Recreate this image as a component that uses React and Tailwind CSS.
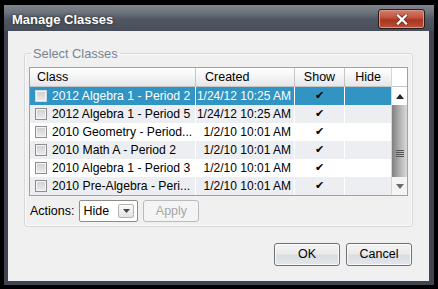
import React from 'react';

const rows = [
  { name: '2012 Algebra 1 - Period 2', created: '1/24/12 10:25 AM', show: true, selected: true },
  { name: '2012 Algebra 1 - Period 5', created: '1/24/12 10:25 AM', show: true },
  { name: '2010 Geometry - Period...', created: '1/2/10 10:01 AM', show: true },
  { name: '2010 Math A - Period 2', created: '1/2/10 10:01 AM', show: true },
  { name: '2010 Algebra 1 - Period 3', created: '1/2/10 10:01 AM', show: true },
  { name: '2010 Pre-Algebra - Peri...', created: '1/2/10 10:01 AM', show: true },
];

const Checkbox = ({ selected }) => (
  <span
    className={`inline-block w-[12px] h-[12px] shrink-0 border ${
      selected ? 'border-[#c9dbe6]' : 'border-[#8d8d8d]'
    } bg-[linear-gradient(to_bottom,#cfcfcf,#ececec)] shadow-[inset_0_0_0_1px_#f4f4f4]`}
  />
);

const Row = ({ row, index }) => {
  const bg = row.selected ? 'bg-[#3194c3]' : index % 2 ? 'bg-[#eceef1]' : 'bg-white';
  const text = row.selected ? 'text-white' : 'text-black';
  return (
    <div className={`grid grid-cols-[166px_99px_50px_46px] h-[18px] ${bg} ${text}`}>
      <div className="flex items-center gap-[5px] pl-[5px] border-r border-white overflow-hidden whitespace-nowrap text-[12.2px]">
        <Checkbox selected={row.selected} />
        <span>{row.name}</span>
      </div>
      <div className="flex items-center justify-end pr-[3px] border-r border-white whitespace-nowrap text-[12px]">
        {row.created}
      </div>
      <div className="flex items-center justify-center border-r border-white font-['DejaVu_Sans',sans-serif] text-[11px]">
        {row.show ? <span className="text-black">✔</span> : null}
      </div>
      <div className="flex items-center justify-center" />
    </div>
  );
};

const Scrollbar = () => (
  <div className="w-[16px] flex flex-col border-l border-[#d6d6d6]">
    <div className="h-[19px] bg-white border-b border-[#c6c6c6]" />
    <div className="h-[18px] bg-white flex items-center justify-center">
      <svg width="8" height="5" viewBox="0 0 8 5">
        <path d="M0 5 L4 0 L8 5 Z" fill="#222" />
      </svg>
    </div>
    <div className="flex-1 bg-[linear-gradient(to_right,#7f7f7f,#ababab_45%,#dadada)] flex flex-col items-center justify-end pb-[20px]">
      <div className="flex flex-col gap-[1px]">
        <span className="block w-[8px] h-[1px] bg-[#555]" />
        <span className="block w-[8px] h-[1px] bg-[#555]" />
        <span className="block w-[8px] h-[1px] bg-[#555]" />
        <span className="block w-[8px] h-[1px] bg-[#555]" />
      </div>
    </div>
    <div className="h-[18px] bg-[#f4f4f4] flex items-center justify-center">
      <svg width="8" height="5" viewBox="0 0 8 5">
        <path d="M0 0 L4 5 L8 0 Z" fill="#6a6a6a" />
      </svg>
    </div>
  </div>
);

const Button = ({ children }) => (
  <button className="w-[66px] h-[23px] rounded-[3px] border border-[#707070] bg-[linear-gradient(to_bottom,#f4f4f4,#ebebeb_45%,#d9dde2_55%,#e3e6ea)] shadow-[inset_0_0_0_1px_#fbfbfb] text-black">
    {children}
  </button>
);

export default function App() {
  return (
    <div className="w-[438px] h-[289px] bg-black pt-[5px] px-[4px] pb-[4px] font-['Liberation_Sans',Arial,sans-serif] text-[12.5px]">
      <div className="h-full flex flex-col bg-[#3f4450]">
        <div className="h-[26px] flex items-start bg-[linear-gradient(to_bottom,#7f848d,#6c727c_30%,#505662_55%,#474d59)]">
          <span className="mt-[5px] ml-[8px] text-white font-bold text-[13px] [text-shadow:0_0_3px_#222]">
            Manage Classes
          </span>
          <div className="ml-auto mr-[9px] mt-[4px] w-[47px] h-[20px] rounded-[3px] border border-[#2a1a18] bg-[linear-gradient(to_bottom,#d1806d,#c0503a_45%,#a9351f_55%,#bb5038)] shadow-[inset_0_0_0_1px_#dc9585] flex items-center justify-center">
            <svg width="12" height="11" viewBox="0 0 12 11">
              <path d="M2 1.5 L10 9.5 M10 1.5 L2 9.5" stroke="#5a1a10" strokeWidth="3.6" strokeLinecap="square" />
              <path d="M2 1.5 L10 9.5 M10 1.5 L2 9.5" stroke="#fff" strokeWidth="2.4" strokeLinecap="square" />
            </svg>
          </div>
        </div>

        <div className="mx-[4px] mr-[5px] mb-[4px] flex-1 bg-[#f0f0f0] flex flex-col px-[16px]">
          <fieldset className="mt-[15px] border border-[#d5d9dc] rounded-[3px] px-[4px] pb-[4px] pt-[6px] shadow-[inset_0_0_0_1px_#fafafa]">
            <legend className="ml-[2px] px-[2px] leading-[15px] text-[12.8px] text-[#768391]">Select Classes</legend>
            <div className="flex border border-[#9aa2aa] bg-white">
              <div className="w-[361px] flex flex-col">
                <div className="grid grid-cols-[166px_99px_50px_46px] h-[19px] bg-[linear-gradient(to_bottom,#ffffff,#f3f4f5_50%,#e4e6e9)] border-b border-[#c6c6c6]">
                  <div className="flex items-center pl-[7px] border-r border-[#c6c6c6]">Class</div>
                  <div className="flex items-center pl-[9px] border-r border-[#c6c6c6]">Created</div>
                  <div className="flex items-center justify-center border-r border-[#c6c6c6]">Show</div>
                  <div className="flex items-center justify-center">Hide</div>
                </div>
                {rows.map((row, i) => (
                  <Row key={row.name} row={row} index={i} />
                ))}
              </div>
              <Scrollbar />
            </div>
            <div className="mt-[4px] h-[22px] flex items-center">
              <span className="ml-[1px] mr-[5px]">Actions:</span>
              <div className="w-[59px] h-[22px] border border-[#8c8c8c] rounded-[2px] bg-white flex items-center pl-[3px]">
                <span>Hide</span>
                <div className="ml-auto mr-[3px] w-[16px] h-[14px] border border-[#b5b5b5] rounded-[2px] bg-[linear-gradient(to_bottom,#fafafa,#e2e2e2)] flex items-center justify-center">
                  <svg width="7" height="4" viewBox="0 0 7 4">
                    <path d="M0 0 L3.5 4 L7 0 Z" fill="#444" />
                  </svg>
                </div>
              </div>
              <div className="ml-[5px] w-[56px] h-[22px] border border-[#b8bcbf] rounded-[3px] bg-[#f4f4f4] flex items-center justify-center text-[#a3a3a3] [text-shadow:0_1px_0_#fff]">
                Apply
              </div>
            </div>
          </fieldset>

          <div className="mt-[16px] flex justify-end gap-[6px] mr-[1px]">
            <Button>OK</Button>
            <Button>Cancel</Button>
          </div>
        </div>
      </div>
    </div>
  );
}
